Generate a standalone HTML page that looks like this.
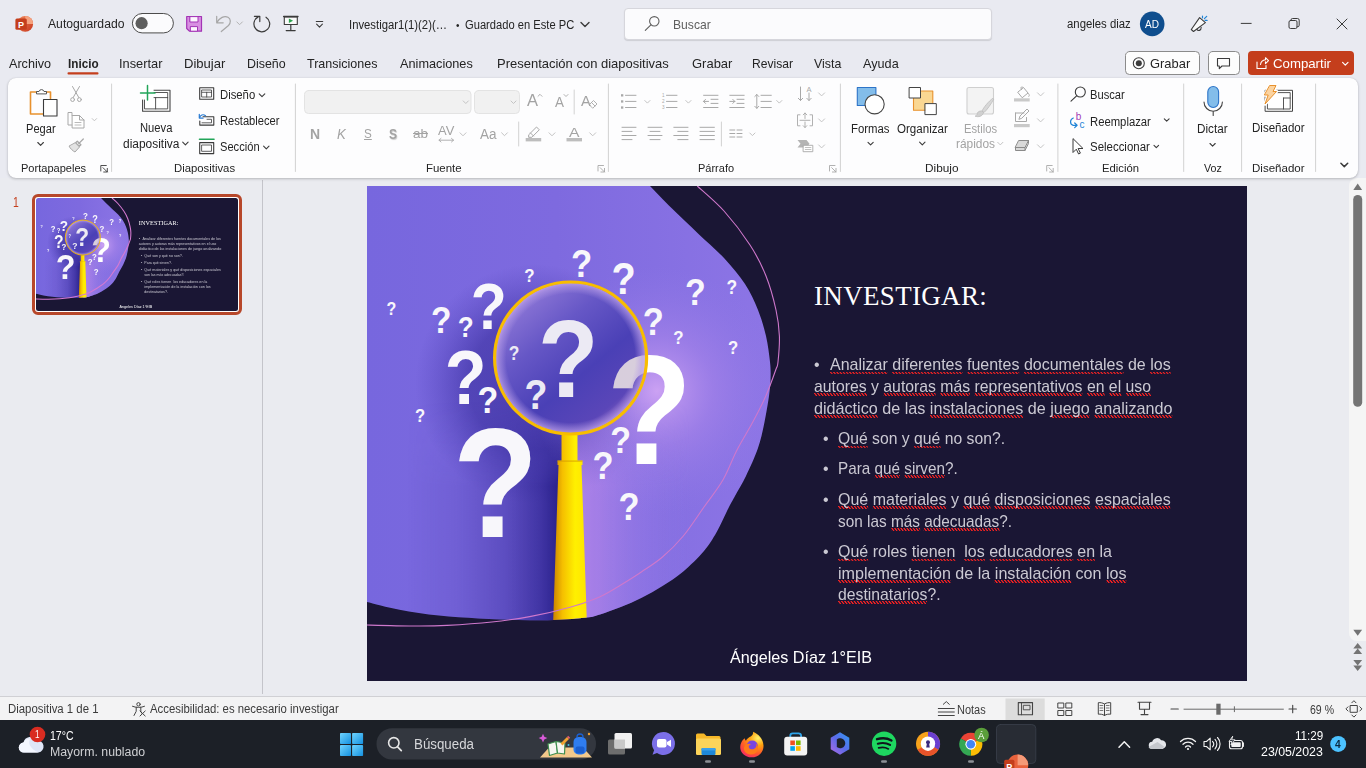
<!DOCTYPE html>
<html lang="es">
<head>
<meta charset="utf-8">
<title>Investigar - PowerPoint</title>
<style>
*{box-sizing:border-box;margin:0;padding:0}
html,body{width:1366px;height:768px;overflow:hidden}
body{position:relative;background:#e9eaf1;font-family:"Liberation Sans",sans-serif;font-size:13px;color:#242424}
.a{position:absolute}
.t{position:absolute;white-space:nowrap;line-height:1;transform-origin:0 0}
#ribbon{left:8px;top:78px;width:1350px;height:99.5px;background:#fdfdfe;border-radius:8px;box-shadow:0 1px 3px rgba(0,0,0,.22),0 0 1px rgba(0,0,0,.15)}
#work{left:0;top:178px;width:1366px;height:519px;background:#eaebf0}
#divider{left:262px;top:180px;width:1px;height:514px;background:#c4c4ca}
#sbtrack{left:1349px;top:178px;width:17px;height:463px;background:#f5f5f5;border-radius:8px 0 0 8px}
#search{left:623.8px;top:8.2px;width:367.8px;height:31.6px;background:#fbfbfd;border:1px solid #d6d6dc;border-radius:4px;box-shadow:0 1px 1px rgba(0,0,0,.12)}
#thumbframe{left:32.2px;top:194.2px;width:209.6px;height:120.6px;border:3px solid #b7472a;border-radius:6px;background:#fff}
#thumb{left:36.1px;top:197.9px;width:202.4px;height:113.4px;overflow:hidden;border-radius:2.5px}
#thumb .slidein{position:absolute;left:0;top:0;width:880px;height:495px;transform:scale(.23);transform-origin:0 0;background:#1a1634;color:#cbc9d3}
#slide{left:367px;top:186px;width:880px;height:495px;background:#1a1634;overflow:hidden;color:#cbc9d3}
#slide .w{background:linear-gradient(45deg,transparent 30%,#f42222 30%,#f42222 70%,transparent 70%) 0 100%/3.4px 2.6px repeat-x}
#slide:after{content:"";position:absolute;inset:0;box-shadow:none}
#status{left:0;top:695.5px;width:1366px;height:24.5px;background:#f3f3f4;border-top:1px solid #d0d0d4}
#taskbar{left:0;top:720px;width:1366px;height:48px;background:#1c2027}
</style>
</head>
<body>
<div class="a" id="work"></div>
<div class="a" id="divider"></div>
<div class="a" id="sbtrack"></div>
<div class="a" id="ribbon"></div>
<div class="a" id="search"></div>
<div class="a" id="thumbframe"></div>
<div class="a" id="status"></div>
<div class="a" id="taskbar"></div>

<svg class="a" style="left:0;top:0;pointer-events:none" width="1366" height="768" viewBox="0 0 1366 768" fill="none" stroke-linecap="round" stroke-linejoin="round">
<defs><linearGradient id="ppg" x1="0" y1="0" x2="1" y2="1"><stop offset="0" stop-color="#f08a5e"/><stop offset="1" stop-color="#c8371c"/></linearGradient><linearGradient id="wing" x1="0" y1="0" x2="1" y2="1"><stop offset="0" stop-color="#6fd4ff"/><stop offset="1" stop-color="#1490df"/></linearGradient></defs>
<circle cx="25.2" cy="23.9" r="7.9" fill="url(#ppg)" />
<path d="M25.2,16 A7.9,7.9 0 0 1 33.1,23.9 L25.2,23.9 Z" fill="#f6a27e" />
<rect x="15.4" y="18.6" width="11.4" height="11.2" fill="#c43e1c" rx="1.5" />
<text x="21.1" y="27.6" font-family="Liberation Sans, sans-serif" font-weight="bold" font-size="9" fill="#fff" text-anchor="middle">P</text>
<rect x="132.4" y="13.5" width="41.0" height="19.4" fill="#fbfbfd" stroke="#4c4c4c" stroke-width="1" rx="9.7" />
<circle cx="141.6" cy="23.2" r="6.1" fill="#5e5e5e" />
<path d="M186.7,16.5 H201.5 V31.2 H189.4 L186.7,28.5 Z" fill="#d88fe2" stroke="#a334b5" stroke-width="1.2" />
<rect x="190.2" y="16.6" width="7.8" height="5.4" fill="#fdf6ff" stroke="#a334b5" stroke-width="1" />
<rect x="190.7" y="26.6" width="6.8" height="4.6" fill="#fdf6ff" stroke="#a334b5" stroke-width="1" />
<path d="M216.7,16.3 V22.8 H223.2 M216.9,22.6 C219.5,17.5 224.5,15.5 228,17.3 C231,19 231,23 228.5,25.5 L221.3,31.5" fill="none" stroke="#a6a6a6" stroke-width="1.2" />
<path d="M236.8,21.9 l2.8,2.8 l2.8,-2.8" stroke="#b4b4b4" stroke-width="1" fill="none"/>
<path d="M266,17.2 A7.9,7.9 0 1 1 258.2,16.9 M254.4,16.3 H259.8 V21.6" fill="none" stroke="#3b3b3b" stroke-width="1.2" />
<rect x="284.3" y="16.9" width="13.0" height="7.6" fill="#fafafa" stroke="#3b3b3b" stroke-width="1.1" />
<path d="M283.6,16.5 L298.0,16.5" stroke="#3b3b3b" stroke-width="1.3"/>
<path d="M290.8,24.6 v5.8 M286.2,30.6 h9" fill="none" stroke="#3b3b3b" stroke-width="1.2" />
<path d="M288.9,18.4 l4.2,2.3 l-4.2,2.3 Z" fill="#2ea44f" />
<path d="M316.3,21.5 L322.7,21.5" stroke="#3b3b3b" stroke-width="1.1"/>
<path d="M316.6,24.2 l2.9,2.9 l2.9,-2.9" stroke="#3b3b3b" stroke-width="1.1" fill="none"/>
<path d="M581.0,22.5 l4.0,4.0 l4.0,-4.0" stroke="#3b3b3b" stroke-width="1.4" fill="none"/>
<circle cx="654.3" cy="21.3" r="4.7" fill="none" stroke="#5f5f5f" stroke-width="1.1" />
<path d="M650.9,24.8 L645.3,30.4" stroke="#5f5f5f" stroke-width="1.1"/>
<circle cx="1152.2" cy="23.9" r="12.3" fill="#0f4e8e" />
<path d="M1191.3,29.5 L1199.6,17.6 L1205.4,22.6 L1193.5,31.5 Z" fill="#fafafa" stroke="#3b3b3b" stroke-width="1.1" />
<path d="M1196.9,29.4 C1198,31.3 1201.2,30.8 1201.2,27.2" fill="none" stroke="#3b3b3b" stroke-width="1.1" />
<path d="M1202.5,16.1 V17.8 M1204.4,18.6 L1206.7,16.3 M1205.1,20.4 H1207.1" fill="none" stroke="#1f84d6" stroke-width="1.2" />
<path d="M1241.2,23.4 L1251.2,23.4" stroke="#3b3b3b" stroke-width="1"/>
<rect x="1289.0" y="20.5" width="8.0" height="8.0" fill="none" stroke="#3b3b3b" stroke-width="1" rx="1.5" />
<path d="M1291,20.3 v-0.3 a1.5,1.5 0 0 1 1.5,-1.5 h5 a1.7,1.7 0 0 1 1.7,1.7 v5 a1.5,1.5 0 0 1 -1.5,1.5 h-0.5" fill="none" stroke="#3b3b3b" stroke-width="1" />
<path d="M1337,19 l10,10 M1347,19 l-10,10" fill="none" stroke="#3b3b3b" stroke-width="1" />
<rect x="67.5" y="72.3" width="31.0" height="2.2" fill="#c43e1c" rx="1" />
<rect x="1125.5" y="51.5" width="74.0" height="23.0" fill="#fdfdfd" stroke="#8b8b8b" stroke-width="1" rx="4" />
<circle cx="1138.8" cy="63.2" r="5.5" fill="none" stroke="#3b3b3b" stroke-width="1.1" />
<circle cx="1138.8" cy="63.2" r="3.0" fill="#3b3b3b" />
<rect x="1208.5" y="51.5" width="31.0" height="23.0" fill="#fdfdfd" stroke="#8b8b8b" stroke-width="1" rx="4" />
<path d="M1217.5,58.5 h12 v7.5 h-7.5 l-2.7,2.7 v-2.7 h-1.8 Z" fill="none" stroke="#3b3b3b" stroke-width="1.1" />
<rect x="1248.0" y="51.0" width="106.0" height="24.0" fill="#c43e1c" rx="4" />
<path d="M1257,62 v6.5 h9 v-3 M1260.5,64.5 c0.5,-3 2.5,-4.6 5,-4.8 v-2 l3,3 l-3,3 v-2" fill="none" stroke="#fff" stroke-width="1.1" />
<path d="M1342.6,62.4 l2.7,2.7 l2.7,-2.7" stroke="#fff" stroke-width="1.2" fill="none"/>
<path d="M111.6,84.0 L111.6,171.5" stroke="#d2d2d2" stroke-width="1"/>
<path d="M295.4,84.0 L295.4,171.5" stroke="#d2d2d2" stroke-width="1"/>
<path d="M608.4,84.0 L608.4,171.5" stroke="#d2d2d2" stroke-width="1"/>
<path d="M840.4,84.0 L840.4,171.5" stroke="#d2d2d2" stroke-width="1"/>
<path d="M1057.9,84.0 L1057.9,171.5" stroke="#d2d2d2" stroke-width="1"/>
<path d="M1183.7,84.0 L1183.7,171.5" stroke="#d2d2d2" stroke-width="1"/>
<path d="M1241.6,84.0 L1241.6,171.5" stroke="#d2d2d2" stroke-width="1"/>
<path d="M1315.6,84.0 L1315.6,171.5" stroke="#d2d2d2" stroke-width="1"/>
<path d="M37,92 h-6.5 v22 h12.5 M50.5,98.5 v-6.5 h-6" fill="none" stroke="#e8912d" stroke-width="1.6" />
<path d="M36.5,93.5 v-2 h2.5 a2.6,2.6 0 0 1 5,0 h2.5 v2 Z" fill="#fff" stroke="#555" stroke-width="1" />
<rect x="43.5" y="99.5" width="13.5" height="16.5" fill="#fff" stroke="#3b3b3b" stroke-width="1.1" />
<path d="M37.8,142.5 l2.8,2.8 l2.8,-2.8" stroke="#3b3b3b" stroke-width="1.1" fill="none"/>
<path d="M72.5,86.5 l6.3,11 M79.5,86.5 l-6.3,11" fill="none" stroke="#a8a8a8" stroke-width="1" />
<circle cx="72.6" cy="99.6" r="1.9" fill="none" stroke="#a8a8a8" stroke-width="1" />
<circle cx="79.4" cy="99.6" r="1.9" fill="none" stroke="#a8a8a8" stroke-width="1" />
<path d="M72,115.5 v-3 h-4 v12.5 h4" fill="none" stroke="#a8a8a8" stroke-width="1" />
<path d="M72.5,115.5 h7 l4.5,4.5 v8 h-11.5 Z M79.5,115.5 v4.5 h4.5" fill="#fff" stroke="#a8a8a8" stroke-width="1" />
<path d="M75,122.5 h6 M75,125 h6" fill="none" stroke="#a8a8a8" stroke-width="0.8" />
<path d="M92.2,118.6 l2.2,2.2 l2.2,-2.2" stroke="#c4c4c4" stroke-width="1" fill="none"/>
<path d="M83.3,139 l-4.6,4.6 M77.3,141.2 l3.6,3.6 l-1.6,1.6 l-3.6,-3.6 Z" fill="none" stroke="#a8a8a8" stroke-width="1.3" />
<path d="M75.5,143 l4,4 l-4.5,5 c-1.5,-0.6 -5,-3.5 -5.8,-5.6 Z" fill="#e3e3e3" stroke="#a8a8a8" stroke-width="1" />
<path d="M100.8,171.0 v-5.5 h5.5 M103.0,167.7 l4.3,4.3 M107.3,168.4 v3.6 h-3.6" fill="none" stroke="#3b3b3b" stroke-width="0.9" />
<rect x="142.6" y="90.2" width="27.4" height="21.0" fill="#fff" stroke="#444" stroke-width="1.1" />
<rect x="144.9" y="92.5" width="22.8" height="16.4" fill="none" stroke="#444" stroke-width="0.9" />
<path d="M144.9,97.6 h22.8 M155.6,97.6 v11.3" fill="none" stroke="#444" stroke-width="0.9" />
<rect x="140.0" y="85.0" width="13.6" height="14.6" fill="#fff" />
<path d="M147.5,85.6 v14.4 M140.5,93 h14.5" fill="none" stroke="#22a559" stroke-width="1.5" />
<path d="M182.7,142.2 l2.7,2.7 l2.7,-2.7" stroke="#3b3b3b" stroke-width="1.1" fill="none"/>
<rect x="199.7" y="87.7" width="14.0" height="11.5" fill="none" stroke="#3b3b3b" stroke-width="1.1" />
<rect x="202.0" y="90.0" width="9.5" height="7.0" fill="none" stroke="#3b3b3b" stroke-width="0.8" />
<path d="M202,92.3 h9.5 M206.7,92.3 v4.7" fill="none" stroke="#3b3b3b" stroke-width="0.8" />
<path d="M259.2,93.8 l2.8,2.8 l2.8,-2.8" stroke="#3b3b3b" stroke-width="1.1" fill="none"/>
<path d="M203,116.8 h10.8 v8.3 h-14 v-4" fill="none" stroke="#3b3b3b" stroke-width="1.1" />
<path d="M207,119.3 h4.5 v3.5 h-9.5" fill="none" stroke="#3b3b3b" stroke-width="0.8" />
<path d="M199.5,118 c0.5,-3.2 3.8,-4.2 6,-2.2 M199.3,114.3 v3.8 h3.8" fill="none" stroke="#2b7cd3" stroke-width="1.2" />
<path d="M199.5,139.3 L214.0,139.3" stroke="#22a559" stroke-width="1.6"/>
<rect x="199.7" y="142.6" width="14.0" height="11.0" fill="none" stroke="#3b3b3b" stroke-width="1.1" />
<rect x="202.0" y="145.0" width="9.5" height="6.3" fill="none" stroke="#3b3b3b" stroke-width="0.8" />
<path d="M263.6,146.1 l2.7,2.7 l2.7,-2.7" stroke="#3b3b3b" stroke-width="1.1" fill="none"/>
<rect x="304.5" y="90.5" width="166.5" height="23.0" fill="#f1f1f1" stroke="#e3e3e3" stroke-width="1" rx="4" />
<path d="M463.2,100.9 l2.6,2.6 l2.6,-2.6" stroke="#c4c4c4" stroke-width="1" fill="none"/>
<rect x="474.5" y="90.5" width="45.0" height="23.0" fill="#f1f1f1" stroke="#e3e3e3" stroke-width="1" rx="4" />
<path d="M511.0,101.0 l2.5,2.5 l2.5,-2.5" stroke="#c4c4c4" stroke-width="1" fill="none"/>
<path d="M538,96.3 l2,-2 l2,2" fill="none" stroke="#a8a8a8" stroke-width="0.9" />
<path d="M564,94.5 l2,2 l2,-2" fill="none" stroke="#a8a8a8" stroke-width="0.9" />
<path d="M574.2,90.0 L574.2,114.0" stroke="#d2d2d2" stroke-width="1"/>
<path d="M589.5,104.5 l4,-4 l3.5,3.5 l-4,4 Z M591.5,102.5 l3.5,3.5" fill="none" stroke="#a8a8a8" stroke-width="0.9" />
<path d="M439,140.2 h14.5 M441,138.4 l-2,1.8 l2,1.8 M451.5,138.4 l2,1.8 l-2,1.8" fill="none" stroke="#a8a8a8" stroke-width="0.9" />
<path d="M460.0,132.8 l3.0,3.0 l3.0,-3.0" stroke="#c4c4c4" stroke-width="1" fill="none"/>
<path d="M501.6,132.8 l2.9,2.9 l2.9,-2.9" stroke="#c4c4c4" stroke-width="1" fill="none"/>
<path d="M518.7,122.0 L518.7,146.0" stroke="#d2d2d2" stroke-width="1"/>
<path d="M529,134.5 l7.5,-7.5 l2.8,2.8 l-7.5,7.5 h-2.8 Z M530.5,133 l3,3" fill="none" stroke="#a8a8a8" stroke-width="1" />
<rect x="525.7" y="138.0" width="15.5" height="3.4" fill="#bdbdbd" />
<path d="M549.0,132.8 l3.0,3.0 l3.0,-3.0" stroke="#c4c4c4" stroke-width="1" fill="none"/>
<rect x="566.5" y="138.0" width="15.5" height="3.4" fill="#bdbdbd" />
<path d="M589.7,132.8 l3.0,3.0 l3.0,-3.0" stroke="#c4c4c4" stroke-width="1" fill="none"/>
<path d="M598.0,171.0 v-5.5 h5.5 M600.2,167.7 l4.3,4.3 M604.5,168.4 v3.6 h-3.6" fill="none" stroke="#a8a8a8" stroke-width="0.9" />
<rect x="621.0" y="94.2" width="2.3" height="2.3" fill="#a8a8a8" />
<path d="M625.5,95.3 L636.0,95.3" stroke="#a8a8a8" stroke-width="1"/>
<rect x="621.0" y="100.3" width="2.3" height="2.3" fill="#a8a8a8" />
<path d="M625.5,101.4 L636.0,101.4" stroke="#a8a8a8" stroke-width="1"/>
<rect x="621.0" y="106.4" width="2.3" height="2.3" fill="#a8a8a8" />
<path d="M625.5,107.5 L636.0,107.5" stroke="#a8a8a8" stroke-width="1"/>
<path d="M644.8,100.5 l2.6,2.6 l2.6,-2.6" stroke="#c4c4c4" stroke-width="1" fill="none"/>
<path d="M666.5,95.3 L677.0,95.3" stroke="#a8a8a8" stroke-width="1"/>
<path d="M666.5,101.4 L677.0,101.4" stroke="#a8a8a8" stroke-width="1"/>
<path d="M666.5,107.5 L677.0,107.5" stroke="#a8a8a8" stroke-width="1"/>
<text x="663.2" y="97" font-family="Liberation Sans, sans-serif" font-size="4.6" fill="#a8a8a8" text-anchor="middle">1</text><text x="663.2" y="103.2" font-family="Liberation Sans, sans-serif" font-size="4.6" fill="#a8a8a8" text-anchor="middle">2</text><text x="663.2" y="109.4" font-family="Liberation Sans, sans-serif" font-size="4.6" fill="#a8a8a8" text-anchor="middle">3</text>
<path d="M685.8,100.5 l2.6,2.6 l2.6,-2.6" stroke="#c4c4c4" stroke-width="1" fill="none"/>
<path d="M703.6,95.3 h14.4 M711,99.3 h7 M711,103.4 h7 M703.6,107.5 h14.4 M708.5,101.4 h-5 M705.5,99.4 l-2,2 l2,2" fill="none" stroke="#a8a8a8" stroke-width="1" />
<path d="M729.8,95.3 h14.4 M737,99.3 h7 M737,103.4 h7 M729.8,107.5 h14.4 M729.8,101.4 h5 M732.8,99.4 l2,2 l-2,2" fill="none" stroke="#a8a8a8" stroke-width="1" />
<path d="M761,95.3 h10.3 M761,101.4 h10.3 M761,107.5 h10.3 M756.8,94.5 v13.8 M754.8,96.5 l2,-2 l2,2 M754.8,106.3 l2,2 l2,-2" fill="none" stroke="#a8a8a8" stroke-width="1" />
<path d="M776.7,100.5 l2.6,2.6 l2.6,-2.6" stroke="#c4c4c4" stroke-width="1" fill="none"/>
<path d="M800.5,87 v13.5 M798.3,98.3 l2.2,2.2 l2.2,-2.2 M809,93 v7.5 M806.8,98.3 l2.2,2.2 l2.2,-2.2" fill="none" stroke="#a8a8a8" stroke-width="1" />
<text x="809" y="92.3" font-family="Liberation Sans, sans-serif" font-size="7.5" fill="#a8a8a8" text-anchor="middle">A</text>
<path d="M818.6,92.9 l3.0,3.0 l3.0,-3.0" stroke="#c4c4c4" stroke-width="1" fill="none"/>
<path d="M800,114.8 h-2.5 v11 h2.5 M810,114.8 h2.5 v11 h-2.5 M800,120.3 h10 M805,113 v5.5 M803.2,114.8 l1.8,-1.8 l1.8,1.8 M805,122 v5.5 M803.2,125.7 l1.8,1.8 l1.8,-1.8" fill="none" stroke="#a8a8a8" stroke-width="0.9" />
<path d="M818.6,118.9 l3.0,3.0 l3.0,-3.0" stroke="#c4c4c4" stroke-width="1" fill="none"/>
<path d="M797.5,140 h9 l3,3.8 l-3,3.8 h-9 l3,-3.8 Z" fill="#b4b4b4" />
<rect x="803.5" y="145.3" width="9.3" height="6.4" fill="#fff" stroke="#a8a8a8" stroke-width="0.9" />
<path d="M805.3,147.5 h5.6 M805.3,149.5 h5.6" fill="none" stroke="#a8a8a8" stroke-width="0.7" />
<path d="M818.6,144.9 l3.0,3.0 l3.0,-3.0" stroke="#c4c4c4" stroke-width="1" fill="none"/>
<path d="M622.0,127.3 L636.0,127.3" stroke="#a8a8a8" stroke-width="1"/>
<path d="M622.0,131.4 L632.0,131.4" stroke="#a8a8a8" stroke-width="1"/>
<path d="M622.0,135.5 L636.0,135.5" stroke="#a8a8a8" stroke-width="1"/>
<path d="M622.0,139.6 L632.0,139.6" stroke="#a8a8a8" stroke-width="1"/>
<path d="M648.0,127.3 L662.0,127.3" stroke="#a8a8a8" stroke-width="1"/>
<path d="M650.0,131.4 L660.0,131.4" stroke="#a8a8a8" stroke-width="1"/>
<path d="M648.0,135.5 L662.0,135.5" stroke="#a8a8a8" stroke-width="1"/>
<path d="M650.0,139.6 L660.0,139.6" stroke="#a8a8a8" stroke-width="1"/>
<path d="M673.8,127.3 L688.0,127.3" stroke="#a8a8a8" stroke-width="1"/>
<path d="M677.8,131.4 L688.0,131.4" stroke="#a8a8a8" stroke-width="1"/>
<path d="M673.8,135.5 L688.0,135.5" stroke="#a8a8a8" stroke-width="1"/>
<path d="M677.8,139.6 L688.0,139.6" stroke="#a8a8a8" stroke-width="1"/>
<path d="M700.0,127.3 L714.4,127.3" stroke="#a8a8a8" stroke-width="1"/>
<path d="M700.0,131.4 L714.4,131.4" stroke="#a8a8a8" stroke-width="1"/>
<path d="M700.0,135.5 L714.4,135.5" stroke="#a8a8a8" stroke-width="1"/>
<path d="M700.0,139.6 L714.4,139.6" stroke="#a8a8a8" stroke-width="1"/>
<path d="M721.4,122.0 L721.4,146.0" stroke="#d2d2d2" stroke-width="1"/>
<path d="M729.8,130.0 L734.8,130.0" stroke="#a8a8a8" stroke-width="1"/>
<path d="M737.0,130.0 L742.0,130.0" stroke="#a8a8a8" stroke-width="1"/>
<path d="M729.8,133.5 L734.8,133.5" stroke="#a8a8a8" stroke-width="1"/>
<path d="M737.0,133.5 L742.0,133.5" stroke="#a8a8a8" stroke-width="1"/>
<path d="M729.8,137.0 L734.8,137.0" stroke="#a8a8a8" stroke-width="1"/>
<path d="M737.0,137.0 L742.0,137.0" stroke="#a8a8a8" stroke-width="1"/>
<path d="M749.8,133.0 l2.6,2.6 l2.6,-2.6" stroke="#c4c4c4" stroke-width="1" fill="none"/>
<path d="M829.5,171.0 v-5.5 h5.5 M831.7,167.7 l4.3,4.3 M836.0,168.4 v3.6 h-3.6" fill="none" stroke="#a8a8a8" stroke-width="0.9" />
<rect x="857.3" y="87.5" width="18.6" height="18.0" fill="#83bdea" stroke="#2d74c8" stroke-width="1.1" />
<circle cx="874.6" cy="104.3" r="9.6" fill="#fff" stroke="#444" stroke-width="1.1" />
<path d="M868.0,142.3 l2.6,2.6 l2.6,-2.6" stroke="#3b3b3b" stroke-width="1.1" fill="none"/>
<rect x="913.5" y="91.0" width="19.3" height="19.3" fill="#fad792" stroke="#e8912d" stroke-width="1.1" />
<rect x="909.5" y="87.5" width="11.0" height="10.5" fill="#fff" stroke="#444" stroke-width="1" />
<rect x="925.3" y="103.6" width="11.0" height="11.0" fill="#fff" stroke="#444" stroke-width="1" />
<path d="M919.6,142.2 l2.7,2.7 l2.7,-2.7" stroke="#3b3b3b" stroke-width="1.1" fill="none"/>
<rect x="967.0" y="87.5" width="26.5" height="26.5" fill="#f3f3f3" stroke="#cfcfcf" stroke-width="1.1" rx="2" />
<path d="M992.5,98.5 c-4,3 -9,9 -10.5,12.5 l2,1.5 c3,-2.5 7.5,-9 9.5,-13 Z" fill="#d8d8d8" stroke="#bdbdbd" stroke-width="0.8" />
<path d="M981.5,111 c-2.5,-0.5 -4.5,1.5 -4.5,3.5 c0,1 -1,1.5 -2,1.5 c3,1.5 8,0.5 8.5,-3.5 Z" fill="#d0d0d0" stroke="#bdbdbd" stroke-width="0.8" />
<path d="M997.7,142.3 l2.6,2.6 l2.6,-2.6" stroke="#c4c4c4" stroke-width="1" fill="none"/>
<path d="M1018,92 l5.5,-4.5 l4.5,5.5 l-5.5,4.5 Z M1021.5,89.5 c-1.5,-2.5 0.5,-3.5 1.5,-2" fill="none" stroke="#a8a8a8" stroke-width="1" />
<path d="M1028.5,93.5 c1,1.5 1.2,2.3 0.3,3" fill="none" stroke="#a8a8a8" stroke-width="0.9" />
<rect x="1014.0" y="98.3" width="15.7" height="3.2" fill="#c9c9c9" />
<path d="M1037.5,92.8 l3.1,3.1 l3.1,-3.1" stroke="#c4c4c4" stroke-width="1" fill="none"/>
<path d="M1015.5,113 h8.5 M1015.5,113 v8.5 h11 v-4 M1019,119 l1,-3 l7,-7 l2,2 l-7,7 Z" fill="none" stroke="#a8a8a8" stroke-width="1" />
<rect x="1014.0" y="124.0" width="15.7" height="3.2" fill="#c9c9c9" />
<path d="M1037.5,118.8 l3.1,3.1 l3.1,-3.1" stroke="#c4c4c4" stroke-width="1" fill="none"/>
<path d="M1019,140.5 h9.5 l-3.5,7 h-9.5 Z M1015.5,147.5 v3 h9.5 v-3 M1025,150.5 l3.5,-7 v-3" fill="#d9d9d9" stroke="#8a8a8a" stroke-width="1" />
<path d="M1037.5,144.8 l3.1,3.1 l3.1,-3.1" stroke="#c4c4c4" stroke-width="1" fill="none"/>
<path d="M1046.7,171.0 v-5.5 h5.5 M1048.9,167.7 l4.3,4.3 M1053.2,168.4 v3.6 h-3.6" fill="none" stroke="#a8a8a8" stroke-width="0.9" />
<circle cx="1080.3" cy="92.0" r="5.0" fill="none" stroke="#3b3b3b" stroke-width="1.1" />
<path d="M1076.6,95.8 L1071.0,101.2" stroke="#3b3b3b" stroke-width="1.1"/>
<text x="1078.5" y="119.6" font-family="Liberation Sans, sans-serif" font-size="10" fill="#a23cb4" text-anchor="middle">b</text><text x="1082" y="128" font-family="Liberation Sans, sans-serif" font-size="10" fill="#1f84d6" text-anchor="middle">c</text>
<path d="M1073.3,118 C1069.8,119.3 1069.5,124.3 1073.2,125.3 H1077 M1074.7,123 l2.4,2.3 l-2.4,2.3" fill="none" stroke="#1f84d6" stroke-width="1.2" />
<path d="M1073,139 v13.5 l3.3,-3.3 l2.3,4.8 l1.8,-0.9 l-2.3,-4.6 h4.5 Z" fill="#fff" stroke="#3b3b3b" stroke-width="1" />
<path d="M1164.3,118.8 l2.4,2.4 l2.4,-2.4" stroke="#3b3b3b" stroke-width="1.1" fill="none"/>
<path d="M1154.0,145.3 l2.3,2.3 l2.3,-2.3" stroke="#3b3b3b" stroke-width="1.1" fill="none"/>
<rect x="1207.8" y="86.5" width="10.8" height="21.0" fill="#83bdea" stroke="#2d74c8" stroke-width="1.1" rx="5.4" />
<path d="M1204,102 a9.2,9.2 0 0 0 18.4,0 M1213.2,111.2 v4.3" fill="none" stroke="#444" stroke-width="1.1" />
<path d="M1210.0,143.5 l2.6,2.6 l2.6,-2.6" stroke="#3b3b3b" stroke-width="1.1" fill="none"/>
<rect x="1265.5" y="90.3" width="27.0" height="21.0" fill="#fff" stroke="#444" stroke-width="1" />
<rect x="1267.8" y="92.6" width="22.4" height="16.4" fill="none" stroke="#444" stroke-width="0.9" />
<path d="M1283.5,98 h6.7 M1283.5,98 v11" fill="none" stroke="#444" stroke-width="0.9" />
<path d="M1270,85.5 h6 l-3,6 h3.5 l-11.5,12.5 l3.2,-9 h-3.5 Z" fill="#fff" stroke="#fff" stroke-width="3.4" />
<path d="M1270,85.5 h6 l-3,6 h3.5 l-11.5,12.5 l3.2,-9 h-3.5 Z" fill="#fbd3a0" stroke="#e8912d" stroke-width="1" />
<path d="M1340.9,163.2 l3.4,3.4 l3.4,-3.4" stroke="#3b3b3b" stroke-width="1.5" fill="none"/>
<path d="M1353.3,190 l4.4,-6.5 l4.4,6.5 Z" fill="#747474" />
<rect x="1353.2" y="195.0" width="9.0" height="211.7" fill="#747474" rx="4.5" />
<path d="M1353.3,629.8 l4.4,6 l4.4,-6 Z" fill="#747474" />
<path d="M1353.3,648.5 l4.4,-5.5 l4.4,5.5 Z M1353.3,654 l4.4,-5.5 l4.4,5.5 Z" fill="#747474" />
<path d="M1353.3,660 l4.4,5.5 l4.4,-5.5 Z M1353.3,665.5 l4.4,5.5 l4.4,-5.5 Z" fill="#747474" />
<circle cx="138.5" cy="704.3" r="1.7" fill="none" stroke="#444" stroke-width="1" />
<path d="M132.5,706.3 c3.5,1.5 8.5,1.5 12,0 M136.2,707.3 v4 l-2.2,4.2 M140.8,707.3 v4 l1,2" fill="none" stroke="#444" stroke-width="1" />
<path d="M140,711 l5.2,5 M145.2,711 l-5.2,5" fill="none" stroke="#444" stroke-width="1" />
<path d="M938.3,708.5 h16 M938.3,712 h16 M938.3,715.5 h16 M943.3,704.3 l3,-2.7 l3,2.7" fill="none" stroke="#444" stroke-width="1" />
<rect x="1005.5" y="698.5" width="39.2" height="21.5" fill="#dcdcdc" />
<rect x="1018.3" y="702.6" width="14.2" height="12.2" fill="none" stroke="#444" stroke-width="1.1" />
<path d="M1021.5,702.6 v12.2" fill="none" stroke="#444" stroke-width="0.9" />
<rect x="1023.7" y="705.3" width="6.3" height="4.5" fill="none" stroke="#444" stroke-width="0.9" />
<rect x="1058.2" y="703.0" width="5.6" height="5.0" fill="none" stroke="#444" stroke-width="1" />
<rect x="1066.2" y="703.0" width="5.6" height="5.0" fill="none" stroke="#444" stroke-width="1" />
<rect x="1058.2" y="710.5" width="5.6" height="5.0" fill="none" stroke="#444" stroke-width="1" />
<rect x="1066.2" y="710.5" width="5.6" height="5.0" fill="none" stroke="#444" stroke-width="1" />
<path d="M1104.5,704 c-2,-1.3 -4,-1.5 -6.2,-1.3 v11.5 c2.2,-0.2 4.2,0 6.2,1.3 c2,-1.3 4,-1.5 6.2,-1.3 v-11.5 c-2.2,-0.2 -4.2,0 -6.2,1.3 v11.5" fill="none" stroke="#444" stroke-width="1" />
<path d="M1100,705.5 h2.8 M1100,708 h2.8 M1100,710.5 h2.8 M1106.3,705.5 h2.8 M1106.3,708 h2.8 M1106.3,710.5 h2.8" fill="none" stroke="#444" stroke-width="0.7" />
<path d="M1138,702.3 h13 M1139.5,702.3 v7 h10 v-7 M1144.5,709.3 v5 M1141,714.6 h7" fill="none" stroke="#444" stroke-width="1.1" />
<path d="M1171.0,709.0 L1178.3,709.0" stroke="#444" stroke-width="1.1"/>
<path d="M1184.0,709.2 L1283.4,709.2" stroke="#6a6a6a" stroke-width="1"/>
<path d="M1234.4,706.7 L1234.4,711.7" stroke="#6a6a6a" stroke-width="1"/>
<rect x="1216.3" y="703.7" width="4.3" height="11.0" fill="#6a6a6a" />
<path d="M1289,709 h7.4 M1292.7,705.3 v7.4" fill="none" stroke="#444" stroke-width="1.1" />
<rect x="1350.5" y="705.5" width="6.8" height="6.8" fill="none" stroke="#444" stroke-width="1" />
<path d="M1351.8,702.8 l2.1,-2.1 l2.1,2.1 M1351.8,715 l2.1,2.1 l2.1,-2.1 M1348,706.8 l-2.1,2.1 l2.1,2.1 M1359.8,706.8 l2.1,2.1 l-2.1,2.1" fill="none" stroke="#444" stroke-width="1" />
<path d="M24,752.5 a5,5 0 0 1 -0.5,-10 a7,7 0 0 1 13,-2 a5.5,5.5 0 0 1 2,12 Z" fill="#dfe6f7" />
<path d="M24,752.5 a5,5 0 0 1 -0.5,-10 a7,7 0 0 1 7,-4 c-3,4 -1,10 8,14 Z" fill="#f4f7ff" />
<circle cx="37.5" cy="734.5" r="7.8" fill="#d92c21" />
<rect x="340.0" y="733.0" width="11.0" height="11.0" fill="url(#wing)" rx="0.8" />
<rect x="352.1" y="733.0" width="11.0" height="11.0" fill="url(#wing)" rx="0.8" />
<rect x="340.0" y="745.1" width="11.0" height="11.0" fill="url(#wing)" rx="0.8" />
<rect x="352.1" y="745.1" width="11.0" height="11.0" fill="url(#wing)" rx="0.8" />
<rect x="376.5" y="728.3" width="219.5" height="31.2" fill="#33373f" rx="15.6" />
<circle cx="393.8" cy="742.8" r="5.2" fill="none" stroke="#e6e6e6" stroke-width="1.6" />
<path d="M397.6,746.8 L401.3,750.6" stroke="#e6e6e6" stroke-width="1.7"/>
<path d="M540,757.5 l9,-10 h34 l9,10 Z" fill="#f3c98b" />
<path d="M548,744 l8,-2.5 l1.5,11.5 l-8,2.5 Z" fill="#f6f6f0" stroke="#3f8f4f" stroke-width="1.2" />
<path d="M556,741.5 l9,1.5 l-0.5,11 l-7,-1 Z" fill="#f6f6f0" stroke="#3f8f4f" stroke-width="1.2" />
<path d="M560.5,743.5 l6.5,-6.5 l2,2 l-6.5,6.5 Z" fill="#f0a030" />
<path d="M567,737 l1.2,-1.2 l2,2 l-1.2,1.2 Z" fill="#e05a70" />
<path d="M543,733.8 l1.3,3 l3,1.3 l-3,1.3 l-1.3,3 l-1.3,-3 l-3,-1.3 l3,-1.3 Z" fill="#d85ad8" />
<rect x="573.5" y="737.0" width="13.0" height="17.5" fill="#2f7df0" rx="5" />
<rect x="575.5" y="746.5" width="9.0" height="7.0" fill="#1b5fd0" rx="2" />
<path d="M577,737 a3,3 0 0 1 6,0" fill="none" stroke="#1b5fd0" stroke-width="1.3" />
<circle cx="589.0" cy="734.0" r="1.2" fill="#f0a030" />
<circle cx="568.5" cy="745.0" r="1.0" fill="#40c0e0" />
<rect x="608.0" y="739.5" width="17.0" height="15.0" fill="#6d6d6d" rx="1.5" />
<rect x="614.5" y="733.0" width="17.5" height="15.5" fill="#f1f1f1" rx="1.5" />
<rect x="614.5" y="739.5" width="10.5" height="9.0" fill="#c9c9c9" />
<path d="M663.5,732 a11.5,11.5 0 1 1 -6.5,21 l-4.5,1.8 l1.6,-4.6 a11.5,11.5 0 0 1 9.4,-18.2 Z" fill="#7b6fe8" />
<rect x="657.0" y="739.0" width="9.5" height="8.6" fill="#fff" rx="2" />
<path d="M667,742 l4,-2.3 v7.2 l-4,-2.3 Z" fill="#fff" />
<path d="M696,735 a1.5,1.5 0 0 1 1.5,-1.5 h6.5 l2.5,2.5 h12.5 a1.5,1.5 0 0 1 1.5,1.5 v15.5 a1.5,1.5 0 0 1 -1.5,1.5 h-21.5 a1.5,1.5 0 0 1 -1.5,-1.5 Z" fill="#f6b828" />
<rect x="696.0" y="738.5" width="25.0" height="16.5" fill="#fcd45a" rx="1.5" />
<rect x="701.5" y="748.0" width="14.0" height="7.0" fill="#1e88d8" rx="1.2" />
<rect x="701.5" y="748.0" width="14.0" height="2.6" fill="#3aa0ea" rx="1" />
<rect x="705.0" y="760.2" width="6.0" height="2.6" fill="#8d9096" rx="1.3" />
<rect x="749.0" y="760.2" width="6.0" height="2.6" fill="#8d9096" rx="1.3" />
<rect x="881.0" y="760.2" width="6.0" height="2.6" fill="#8d9096" rx="1.3" />
<rect x="968.0" y="760.2" width="6.0" height="2.6" fill="#8d9096" rx="1.3" />
<defs><radialGradient id="ffg" cx="758" cy="735" r="24" gradientUnits="userSpaceOnUse"><stop offset="0" stop-color="#fff36b"/><stop offset="0.35" stop-color="#ffa20e"/><stop offset="0.7" stop-color="#ff5a2a"/><stop offset="1" stop-color="#f5256a"/></radialGradient></defs>
<g transform="matrix(1 0 0 0.905 0 72.96)">
<path d="M741.2,740 c0.8,-2.2 2.3,-4.2 3.8,-5 c-0.2,1.2 0.3,2.2 1,2.8 c1.5,-3.5 5,-4 6.5,-6.5 c0.6,-1 0.7,-2 0.5,-3.3 c5.5,2.5 10.2,8 10.5,15 c0.3,7.5 -5.2,13.2 -11.8,13.2 c-6.7,0 -11.6,-5.2 -11.5,-11.5 c0,-1.7 0.4,-3.3 1,-4.7 Z" fill="url(#ffg)" />
<circle cx="752.2" cy="743.2" r="5.6" fill="#7a45e0" />
<path d="M745.5,742.5 c1.5,-1.6 4,-1.8 5.5,-0.5 c-2,0.3 -2.8,2 -2,3.6 c0.9,1.8 3.4,2.3 5.3,1.2 c2,-1.2 2.6,-3.6 1.8,-5.8 c3,3 2.5,8.5 -1.2,11 c-3.8,2.5 -9,1 -10.6,-3.3 c-0.8,-2.2 -0.3,-4.6 1.2,-6.2 Z" fill="#ff7a1a" />
</g>
<path d="M790.3,737 v-1.3 a2.4,2.4 0 0 1 2.4,-2.4 h6 a2.4,2.4 0 0 1 2.4,2.4 v1.3" fill="none" stroke="#2ea4ea" stroke-width="1.8" />
<rect x="784.2" y="736.8" width="23.0" height="18.8" fill="#f4f4f4" rx="3" />
<rect x="790.3" y="740.5" width="4.6" height="4.6" fill="#f25022" />
<rect x="796.0" y="740.5" width="4.6" height="4.6" fill="#7fba00" />
<rect x="790.3" y="746.2" width="4.6" height="4.6" fill="#00a4ef" />
<rect x="796.0" y="746.2" width="4.6" height="4.6" fill="#ffb900" />
<defs><linearGradient id="m365" x1="0" y1="1" x2="1" y2="0"><stop offset="0" stop-color="#b06ae6"/><stop offset="0.5" stop-color="#5b6be8"/><stop offset="1" stop-color="#2f9bf2"/></linearGradient></defs>
<path d="M840,732.3 l9.3,5.4 v11.6 l-9.3,5.4 l-9.3,-5.4 v-11.6 Z" fill="url(#m365)" />
<path d="M840,738.2 c3,0 5.2,2.2 5.2,5 c0,2.8 -2.2,5 -5.2,5 c-1.2,0 -2.3,-0.4 -3.2,-1.1 l0,-7.5 c0.9,-0.9 2,-1.4 3.2,-1.4 Z" fill="#1c2027" />
<path d="M836.8,739.6 l-6.1,3.6 v-5.5 l6.1,-3.5 Z" fill="#1c2027" opacity=".0"/>
<circle cx="884.1" cy="743.7" r="12.2" fill="#1ed760" />
<path d="M877,739.2 c5,-1.5 10.5,-1 14.5,1.3" fill="none" stroke="#10151c" stroke-width="2.3" />
<path d="M877.8,743.7 c4.2,-1.2 8.8,-0.8 12.3,1.2" fill="none" stroke="#10151c" stroke-width="2" />
<path d="M878.6,747.9 c3.4,-0.9 7,-0.6 9.8,1" fill="none" stroke="#10151c" stroke-width="1.7" />
<circle cx="928.0" cy="743.7" r="12.0" fill="#f7a21b" />
<path d="M928,731.7 a12,12 0 0 1 10.4,18 l-10.4,-6 Z" fill="#6b3fd0" />
<path d="M917.6,749.7 a12,12 0 0 0 20.8,0 l-10.4,-6 Z" fill="#e8532a" />
<circle cx="928.0" cy="743.7" r="7.2" fill="#fff" />
<circle cx="928.0" cy="742.3" r="2.0" fill="#3a2a80" />
<path d="M927,743 h2 l0.8,4.5 h-3.6 Z" fill="#3a2a80" />
<path d="M970.8,744.3 L960.8,738.5 A11.5,11.5 0 0 1 980.8,738.5 Z" fill="#ea4335" />
<path d="M970.8,744.3 L980.8,738.5 A11.5,11.5 0 0 1 970.8,755.8 Z" fill="#fbbc04" />
<path d="M970.8,744.3 L970.8,755.8 A11.5,11.5 0 0 1 960.8,738.5 Z" fill="#34a853" />
<circle cx="970.8" cy="744.3" r="5.4" fill="#fff" />
<circle cx="970.8" cy="744.3" r="4.3" fill="#4285f4" />
<circle cx="981.6" cy="735.0" r="7.3" fill="#5a9e3a" />
<rect x="996.5" y="724.5" width="39.3" height="39.0" fill="#282c34" rx="4" stroke="#3a404b" stroke-width="0.8"/>
<circle cx="1017.6" cy="765.2" r="10.6" fill="#e8623c" />
<path d="M1017.6,754.6 a10.6,10.6 0 0 1 10.6,10.6 h-10.6 Z" fill="#f59a78" />
<rect x="1004.2" y="759.8" width="10.2" height="9.0" fill="#c43e1c" rx="1.5" />
<text x="1009.3" y="769.8" font-family="Liberation Sans, sans-serif" font-weight="bold" font-size="9" fill="#fff" text-anchor="middle">P</text>
<path d="M1119,747.3 l5.3,-5.6 l5.3,5.6" fill="none" stroke="#f2f2f2" stroke-width="1.5" />
<path d="M1152.5,749 a3.6,3.6 0 0 1 -0.3,-7.2 a5,5 0 0 1 9,-1.5 a4,4 0 0 1 1,8.7 Z" fill="#e4e6ea" />
<path d="M1148.5,747 l9,-5 l6.5,4.5 a3,3 0 0 1 -2.5,2.5 h-9.5 a3.5,3.5 0 0 1 -3.5,-2 Z" fill="#c4c7cc" />
<path d="M1180.5,741.5 a10.5,10.5 0 0 1 15,0 M1183,744.3 a7,7 0 0 1 10,0 M1185.5,747 a3.5,3.5 0 0 1 5,0" fill="none" stroke="#f2f2f2" stroke-width="1.3" />
<circle cx="1188.0" cy="749.0" r="1.1" fill="#f2f2f2" />
<path d="M1204,741.5 h2.5 l3.7,-3.3 v11.6 l-3.7,-3.3 h-2.5 Z" fill="none" stroke="#f2f2f2" stroke-width="1.1" />
<path d="M1212.5,741.3 a4,4 0 0 1 0,5.5 M1215,739.3 a7,7 0 0 1 0,9.5 M1217.5,737.5 a9.5,9.5 0 0 1 0,13" fill="none" stroke="#f2f2f2" stroke-width="1.1" />
<rect x="1229.5" y="740.5" width="13.0" height="8.3" fill="none" stroke="#f2f2f2" stroke-width="1.1" rx="2" />
<rect x="1231.3" y="742.2" width="9.4" height="4.9" fill="#f2f2f2" rx="0.8" />
<path d="M1243.3,743 v3.3" fill="none" stroke="#f2f2f2" stroke-width="1.3" />
<path d="M1232.5,736.5 l-3.5,5 h3 l-1,3.5 l4,-5.2 h-3 Z" fill="#1c212b" stroke="#f2f2f2" stroke-width="0.9" />
<circle cx="1338.2" cy="743.9" r="8.0" fill="#4cc2ff" />
</svg>
<div class="t" style="left:48.0px;top:17.6px;font-size:12.5px;transform:scaleX(0.973);">Autoguardado</div>
<div class="t" style="left:349.0px;top:18.8px;font-size:12.5px;transform:scaleX(0.904);">Investigar1(1)(2)(…</div>
<div class="t" style="left:455.5px;top:20.9px;font-size:10px;transform:scaleX(0.996);">•</div>
<div class="t" style="left:465.3px;top:18.8px;font-size:12.5px;transform:scaleX(0.893);">Guardado en Este PC</div>
<div class="t" style="left:673.0px;top:17.6px;font-size:13px;transform:scaleX(0.932);color:#5f5f5f;">Buscar</div>
<div class="t" style="left:1067.4px;top:18.0px;font-size:12.5px;transform:scaleX(0.909);">angeles diaz</div>
<div class="t" style="left:1145.0px;top:18.7px;font-size:10.5px;transform:scaleX(0.959);color:#fff;">AD</div>
<div class="t" style="left:9.1px;top:56.9px;font-size:13px;transform:scaleX(0.971);">Archivo</div>
<div class="t" style="left:67.7px;top:56.9px;font-size:13px;transform:scaleX(0.901);font-weight:700;">Inicio</div>
<div class="t" style="left:119.2px;top:56.9px;font-size:13px;transform:scaleX(0.985);">Insertar</div>
<div class="t" style="left:184.2px;top:56.9px;font-size:13px;transform:scaleX(1.005);">Dibujar</div>
<div class="t" style="left:246.5px;top:56.9px;font-size:13px;transform:scaleX(0.956);">Diseño</div>
<div class="t" style="left:307.0px;top:56.9px;font-size:13px;transform:scaleX(0.962);">Transiciones</div>
<div class="t" style="left:400.0px;top:56.9px;font-size:13px;transform:scaleX(0.978);">Animaciones</div>
<div class="t" style="left:497.0px;top:56.9px;font-size:13px;transform:scaleX(0.999);">Presentación con diapositivas</div>
<div class="t" style="left:692.3px;top:56.9px;font-size:13px;transform:scaleX(0.998);">Grabar</div>
<div class="t" style="left:752.3px;top:56.9px;font-size:13px;transform:scaleX(0.930);">Revisar</div>
<div class="t" style="left:814.2px;top:56.9px;font-size:13px;transform:scaleX(0.952);">Vista</div>
<div class="t" style="left:863.0px;top:56.9px;font-size:13px;transform:scaleX(0.974);">Ayuda</div>
<div class="t" style="left:1149.8px;top:56.5px;font-size:13px;transform:scaleX(0.993);">Grabar</div>
<div class="t" style="left:1272.7px;top:56.5px;font-size:13px;transform:scaleX(1.016);color:#fff;">Compartir</div>
<div class="t" style="left:26.4px;top:122.7px;font-size:12px;transform:scaleX(0.924);">Pegar</div>
<div class="t" style="left:20.9px;top:162.3px;font-size:11.6px;transform:scaleX(0.953);">Portapapeles</div>
<div class="t" style="left:140.0px;top:121.6px;font-size:12px;transform:scaleX(0.934);">Nueva</div>
<div class="t" style="left:122.6px;top:137.6px;font-size:12px;transform:scaleX(0.995);">diapositiva</div>
<div class="t" style="left:219.6px;top:88.7px;font-size:12px;transform:scaleX(0.942);">Diseño</div>
<div class="t" style="left:219.6px;top:114.6px;font-size:12px;transform:scaleX(0.928);">Restablecer</div>
<div class="t" style="left:219.6px;top:140.9px;font-size:12px;transform:scaleX(0.927);">Sección</div>
<div class="t" style="left:173.5px;top:162.3px;font-size:11.6px;transform:scaleX(0.977);">Diapositivas</div>
<div class="t" style="left:426.2px;top:162.3px;font-size:11.6px;transform:scaleX(0.986);">Fuente</div>
<div class="t" style="left:698.2px;top:162.3px;font-size:11.6px;transform:scaleX(0.949);">Párrafo</div>
<div class="t" style="left:851.2px;top:122.6px;font-size:12px;transform:scaleX(0.947);">Formas</div>
<div class="t" style="left:897.4px;top:122.6px;font-size:12px;transform:scaleX(0.964);">Organizar</div>
<div class="t" style="left:964.0px;top:122.6px;font-size:12px;transform:scaleX(0.934);color:#a3a3a3;">Estilos</div>
<div class="t" style="left:955.5px;top:138.3px;font-size:12px;transform:scaleX(0.993);color:#a3a3a3;">rápidos</div>
<div class="t" style="left:924.8px;top:162.3px;font-size:11.6px;transform:scaleX(1.019);">Dibujo</div>
<div class="t" style="left:1089.9px;top:89.3px;font-size:12px;transform:scaleX(0.929);">Buscar</div>
<div class="t" style="left:1089.9px;top:115.6px;font-size:12px;transform:scaleX(0.941);">Reemplazar</div>
<div class="t" style="left:1089.9px;top:141.3px;font-size:12px;transform:scaleX(0.954);">Seleccionar</div>
<div class="t" style="left:1102.4px;top:162.3px;font-size:11.6px;transform:scaleX(0.973);">Edición</div>
<div class="t" style="left:1197.4px;top:123.2px;font-size:12px;transform:scaleX(0.976);">Dictar</div>
<div class="t" style="left:1204.2px;top:162.3px;font-size:11.6px;transform:scaleX(0.920);">Voz</div>
<div class="t" style="left:1252.3px;top:122.3px;font-size:12px;transform:scaleX(0.962);">Diseñador</div>
<div class="t" style="left:1252.3px;top:162.3px;font-size:11.6px;transform:scaleX(0.995);">Diseñador</div>
<div class="t" style="left:310.2px;top:126.5px;font-size:14px;transform:scaleX(0.998);color:#a3a3a3;font-weight:700;">N</div>
<div class="t" style="left:337.2px;top:126.5px;font-size:14px;transform:scaleX(0.942);color:#a3a3a3;font-style:italic;">K</div>
<div class="t" style="left:364.0px;top:126.6px;font-size:13.5px;transform:scaleX(0.865);color:#a3a3a3;text-decoration:underline;">S</div>
<div class="t" style="left:389.4px;top:126.5px;font-size:14px;transform:scaleX(0.856);color:#a3a3a3;font-weight:700;text-shadow:1px 1px 1px #ccc;">S</div>
<div class="t" style="left:412.5px;top:127.4px;font-size:13px;transform:scaleX(1.037);color:#a3a3a3;text-decoration:line-through;">ab</div>
<div class="t" style="left:438.0px;top:124.9px;font-size:12.5px;transform:scaleX(1.035);color:#a3a3a3;">AV</div>
<div class="t" style="left:480.0px;top:126.5px;font-size:14px;transform:scaleX(0.964);color:#a3a3a3;">Aa</div>
<div class="t" style="left:527.0px;top:92.2px;font-size:17px;transform:scaleX(0.970);color:#a3a3a3;">A</div>
<div class="t" style="left:554.5px;top:94.7px;font-size:14px;transform:scaleX(0.963);color:#a3a3a3;">A</div>
<div class="t" style="left:581.2px;top:92.9px;font-size:15px;transform:scaleX(0.978);color:#a3a3a3;">A</div>
<div class="t" style="left:569.0px;top:125.6px;font-size:13.5px;transform:scaleX(1.165);color:#a3a3a3;">A</div>
<div class="t" style="left:8.2px;top:703.2px;font-size:12px;transform:scaleX(0.949);color:#3b3b3b;">Diapositiva 1 de 1</div>
<div class="t" style="left:150.2px;top:703.2px;font-size:12px;transform:scaleX(0.946);color:#3b3b3b;">Accesibilidad: es necesario investigar</div>
<div class="t" style="left:956.6px;top:704.0px;font-size:12px;transform:scaleX(0.915);color:#3b3b3b;">Notas</div>
<div class="t" style="left:1310.0px;top:703.9px;font-size:12px;transform:scaleX(0.877);color:#3b3b3b;">69 %</div>
<div class="t" style="left:50.4px;top:730.0px;font-size:12.5px;transform:scaleX(0.845);color:#fff;">17°C</div>
<div class="t" style="left:50.4px;top:745.7px;font-size:12.5px;transform:scaleX(0.985);color:#cfd0d3;">Mayorm. nublado</div>
<div class="t" style="left:413.5px;top:736.8px;font-size:14px;transform:scaleX(0.951);color:#d6d7da;">Búsqueda</div>
<div class="t" style="left:1294.6px;top:729.9px;font-size:12.5px;transform:scaleX(0.932);color:#fff;">11:29</div>
<div class="t" style="left:1261.0px;top:745.8px;font-size:12.5px;transform:scaleX(0.989);color:#fff;">23/05/2023</div>
<div class="t" style="left:1335.3px;top:738.7px;font-size:10.5px;transform:scaleX(0.975);color:#0b2a40;font-weight:700;">4</div>
<div class="t" style="left:35.3px;top:729.3px;font-size:11px;transform:scaleX(0.735);color:#fff;">1</div>
<div class="t" style="left:978.4px;top:730.6px;font-size:9.5px;transform:scaleX(1.009);color:#fff;">Á</div>
<div class="t" style="left:13.2px;top:193.9px;font-size:15.5px;transform:scaleX(0.672);color:#c43e1c;">1</div>
<div class="a" id="slide">
<svg class="a" style="left:0;top:0" width="880" height="495" viewBox="0 0 880 495" font-family="Liberation Sans, sans-serif" font-weight="bold" text-anchor="middle">
<defs>
<linearGradient id="bg" x1="0" y1="0" x2="1" y2="0"><stop offset="0" stop-color="#7767de"/><stop offset="0.45" stop-color="#7e6adf"/><stop offset="1" stop-color="#8e76e6"/></linearGradient>
<radialGradient id="glow" cx="290" cy="205" r="125" gradientUnits="userSpaceOnUse"><stop offset="0" stop-color="#cfa4f4" stop-opacity="0.95"/><stop offset="0.45" stop-color="#aa86ea" stop-opacity="0.55"/><stop offset="1" stop-color="#9079e6" stop-opacity="0"/></radialGradient>
<linearGradient id="hand" x1="0" y1="0" x2="1" y2="0"><stop offset="0" stop-color="#c98200"/><stop offset="0.28" stop-color="#f5bf00"/><stop offset="0.65" stop-color="#fff000"/><stop offset="1" stop-color="#ffe400"/></linearGradient>
<linearGradient id="lens" x1="0.15" y1="0.1" x2="0.85" y2="0.95"><stop offset="0" stop-color="#9079d8"/><stop offset="0.3" stop-color="#6657c6"/><stop offset="0.6" stop-color="#4a40b6"/><stop offset="0.85" stop-color="#5a46b8"/><stop offset="1" stop-color="#9a6cc8"/></linearGradient>
<radialGradient id="rim" cx="203.6" cy="172" r="75" gradientUnits="userSpaceOnUse"><stop offset="0.86" stop-color="#b49ae6" stop-opacity="0"/><stop offset="0.95" stop-color="#b49ae6" stop-opacity="0.55"/><stop offset="1" stop-color="#c9a8ee" stop-opacity="0.75"/></radialGradient>
<radialGradient id="lshd" cx="168" cy="198" r="120" gradientUnits="userSpaceOnUse"><stop offset="0" stop-color="#2a2190" stop-opacity="0.6"/><stop offset="0.55" stop-color="#2a2190" stop-opacity="0.5"/><stop offset="0.8" stop-color="#2f2598" stop-opacity="0.2"/><stop offset="1" stop-color="#3a2fa4" stop-opacity="0"/></radialGradient>
<linearGradient id="hshd" x1="40" y1="0" x2="203.5" y2="0" gradientUnits="userSpaceOnUse"><stop offset="0" stop-color="#2a2190" stop-opacity="0"/><stop offset="0.3" stop-color="#2a2190" stop-opacity="0.12"/><stop offset="0.6" stop-color="#2a2190" stop-opacity="0.38"/><stop offset="0.82" stop-color="#261d8a" stop-opacity="0.7"/><stop offset="0.93" stop-color="#221a84" stop-opacity="0.92"/><stop offset="1" stop-color="#221a84" stop-opacity="0.95"/></linearGradient>
<linearGradient id="hglow" x1="203" y1="0" x2="323" y2="0" gradientUnits="userSpaceOnUse"><stop offset="0" stop-color="#b888ea" stop-opacity="0.85"/><stop offset="0.25" stop-color="#b888ea" stop-opacity="0.6"/><stop offset="0.6" stop-color="#a884ea" stop-opacity="0.25"/><stop offset="1" stop-color="#9079e6" stop-opacity="0"/></linearGradient>
<linearGradient id="vf" x1="0" y1="215" x2="0" y2="300" gradientUnits="userSpaceOnUse"><stop offset="0" stop-color="#000"/><stop offset="1" stop-color="#fff"/></linearGradient>
<mask id="vfade" maskUnits="userSpaceOnUse" x="0" y="0" width="880" height="495"><rect x="0" y="0" width="880" height="495" fill="url(#vf)"/></mask>
<filter id="b18" x="-50%" y="-50%" width="200%" height="200%"><feGaussianBlur stdDeviation="20"/></filter>
<filter id="b8" x="-50%" y="-50%" width="200%" height="200%"><feGaussianBlur stdDeviation="9"/></filter>
<clipPath id="blobclip"><path d="M0,0 L283.0,0.0 C286.7,3.8 297.0,14.7 305.0,22.6 C313.0,30.5 322.3,39.2 331.0,47.4 C339.7,55.6 349.2,63.6 357.0,72.0 C364.8,80.4 372.3,89.3 378.0,98.0 C383.7,106.7 387.5,115.3 391.0,124.0 C394.5,132.7 397.0,141.3 399.0,150.0 C401.0,158.7 402.2,168.7 403.0,176.0 C403.8,183.3 403.7,188.3 403.5,194.0 C403.3,199.7 403.0,203.0 402.0,210.0 C401.0,217.0 399.3,227.3 397.5,236.0 C395.7,244.7 394.1,253.0 391.0,262.0 C387.9,271.0 382.8,282.0 379.0,290.0 C375.2,298.0 370.8,304.8 368.0,310.0 C365.2,315.2 365.1,315.0 362.0,321.0 C358.9,327.0 353.9,338.7 349.7,346.0 C345.5,353.3 342.6,358.4 337.0,365.0 C331.4,371.6 322.9,379.9 316.0,385.7 C309.1,391.5 302.4,395.7 295.5,400.0 C288.6,404.3 281.7,408.2 274.7,411.7 C267.8,415.2 260.7,418.2 253.8,421.0 C246.8,423.8 238.7,426.6 233.0,428.4 C227.3,430.1 227.4,430.6 219.7,431.5 C212.0,432.4 198.2,433.6 186.7,434.0 C175.3,434.4 163.5,434.1 151.0,433.9 C138.5,433.6 124.8,433.2 111.6,432.5 C98.4,431.8 85.2,431.1 72.0,429.6 C58.8,428.2 44.5,426.1 32.5,423.8 C20.5,421.5 5.4,417.3 0.0,416.0 L0,416.0 Z"/></clipPath>
<clipPath id="lensclip"><circle cx="203.6" cy="172" r="75"/></clipPath>
<clipPath id="leftc"><rect x="0" y="0" width="203" height="495"/></clipPath>
<clipPath id="rightc"><rect x="203" y="0" width="300" height="495"/></clipPath>
</defs>
<g clip-path="url(#blobclip)">
<rect width="420" height="440" fill="url(#bg)"/>
<rect x="40" y="60" width="280" height="260" fill="url(#lshd)"/>
<rect x="40" y="215" width="163.5" height="260" fill="url(#hshd)" mask="url(#vfade)"/>
<rect x="150" y="60" width="280" height="330" fill="url(#glow)"/>
<rect x="203" y="215" width="120" height="260" fill="url(#hglow)" mask="url(#vfade)"/>
<text transform="translate(282.5,278.0) scale(.9,1)" font-size="155.2" fill="#ffffff">?</text>
<text transform="translate(24.5,128.5) scale(.9,1)" font-size="17.8" fill="#f8f7fb">?</text>
<text transform="translate(74.3,147.0) scale(.9,1)" font-size="37.2" fill="#f8f7fb">?</text>
<text transform="translate(98.7,150.5) scale(.9,1)" font-size="29.0" fill="#f8f7fb">?</text>
<text transform="translate(121.7,143.0) scale(.9,1)" font-size="65.4" fill="#f8f7fb">?</text>
<text transform="translate(162.3,96.3) scale(.9,1)" font-size="18.8" fill="#f8f7fb">?</text>
<text transform="translate(214.5,91.0) scale(.9,1)" font-size="38.6" fill="#f8f7fb">?</text>
<text transform="translate(256.5,108.0) scale(.9,1)" font-size="44.1" fill="#f8f7fb">?</text>
<text transform="translate(328.3,119.3) scale(.9,1)" font-size="37.7" fill="#f8f7fb">?</text>
<text transform="translate(364.8,108.0) scale(.9,1)" font-size="19.3" fill="#f8f7fb">?</text>
<text transform="translate(286.3,148.8) scale(.9,1)" font-size="38.3" fill="#f8f7fb">?</text>
<text transform="translate(311.3,157.6) scale(.9,1)" font-size="18.8" fill="#f8f7fb">?</text>
<text transform="translate(366.2,168.0) scale(.9,1)" font-size="18.6" fill="#f8f7fb">?</text>
<text transform="translate(98.7,218.0) scale(.9,1)" font-size="75.9" fill="#f8f7fb">?</text>
<text transform="translate(121.0,227.0) scale(.9,1)" font-size="37.8" fill="#f8f7fb">?</text>
<text transform="translate(53.0,236.0) scale(.9,1)" font-size="18.5" fill="#f8f7fb">?</text>
<text transform="translate(128.5,351.4) scale(.9,1)" font-size="155.7" fill="#f8f7fb">?</text>
<text transform="translate(253.7,267.4) scale(.9,1)" font-size="37.8" fill="#f8f7fb">?</text>
<text transform="translate(236.0,292.8) scale(.9,1)" font-size="38.3" fill="#f8f7fb">?</text>
<text transform="translate(262.0,334.4) scale(.9,1)" font-size="38.2" fill="#f8f7fb">?</text>
<path d="M194.5,249 L210.5,249 L210.5,274.5 L215.5,274.5 L215.5,279 L214.5,279 L220,440 L186,440 L191.5,279 L190.5,279 L190.5,274.5 L194.5,274.5 Z" fill="url(#hand)"/>
<rect x="190.5" y="274.5" width="25" height="1.2" fill="#d69a00" opacity=".7"/>
</g>
<circle cx="203.6" cy="172" r="76" fill="url(#lens)"/>
<g clip-path="url(#lensclip)">
<text transform="translate(282.5,278.0) scale(.9,1)" font-size="155.2" fill="#ebe2e2" opacity=".88">?</text>
<text transform="translate(201.3,210.7) scale(.9,1)" font-size="109.9" fill="#eceaf4">?</text>
<text transform="translate(147.0,174.0) scale(.9,1)" font-size="19.3" fill="#eceaf4">?</text>
<text transform="translate(169.0,223.0) scale(.9,1)" font-size="41.7" fill="#eceaf4">?</text>
</g>
<circle cx="203.6" cy="172" r="75" fill="url(#rim)"/>
<circle cx="203.6" cy="172" r="76" fill="none" stroke="#f8bd00" stroke-width="3.2"/>
<path d="M330.3,0.0 C334.7,4.2 348.2,15.2 357.0,25.0 C365.8,34.8 376.0,48.2 383.0,59.0 C390.0,69.8 394.7,79.2 399.0,90.0 C403.3,100.8 406.8,114.0 409.0,124.0 C411.2,134.0 412.1,141.3 412.4,150.0 C412.7,158.7 411.6,170.3 411.0,176.0 C410.4,181.7 410.7,178.3 408.7,184.0 C406.7,189.7 402.6,201.3 398.8,210.0 C395.0,218.7 390.6,227.0 385.8,236.0 C381.0,245.0 375.0,254.3 370.0,264.0 C365.0,273.7 361.4,284.5 355.9,294.0 C350.4,303.5 343.6,311.7 337.0,321.0 C330.4,330.3 323.2,341.7 316.3,350.0 C309.4,358.3 302.4,365.1 295.5,371.0 C288.6,376.9 281.7,381.0 274.7,385.7 C267.8,390.4 260.7,394.8 253.8,399.0 C246.8,403.2 241.3,407.0 233.0,410.7 C224.7,414.4 215.3,417.7 203.8,421.0 C192.3,424.3 177.2,427.9 164.0,430.4 C150.8,432.9 138.8,434.5 124.8,436.0 C110.8,437.5 93.2,438.7 80.0,439.4 C66.8,440.1 59.0,440.1 45.7,440.0 C32.4,439.9 7.6,439.2 0.0,439.0" fill="none" stroke="#cf78cc" stroke-width="1.1"/>
</svg>
<div class="t" style="left:447.0px;top:97.0px;font-size:27px;color:#ffffff;font-family:'Liberation Serif',serif;letter-spacing:0.33px;">INVESTIGAR:</div>
<div class="t" style="left:447.0px;top:170.3px;font-size:17px;transform:scaleX(0.941);">•</div>
<div class="t" style="left:463.0px;top:170.3px;font-size:17px;transform:scaleX(0.941);"><span class="w">Analizar</span> <span class="w">diferentes</span> <span class="w">fuentes</span> <span class="w">documentales</span> de <span class="w">los</span></div>
<div class="t" style="left:447.0px;top:192.0px;font-size:17px;transform:scaleX(0.9285);"><span class="w">autores</span> y <span class="w">autoras</span> <span class="w">más</span> <span class="w">representativos</span> <span class="w">en</span> <span class="w">el</span> <span class="w">uso</span></div>
<div class="t" style="left:447.0px;top:213.6px;font-size:17px;transform:scaleX(0.9503);"><span class="w">didáctico</span> de las <span class="w">instalaciones</span> de <span class="w">juego</span> <span class="w">analizando</span></div>
<div class="t" style="left:456.0px;top:244.1px;font-size:17px;transform:scaleX(0.941);">•</div>
<div class="t" style="left:471.0px;top:244.1px;font-size:17px;transform:scaleX(0.925);"><span class="w">Qué</span> son y <span class="w">qué</span> no son?.</div>
<div class="t" style="left:456.0px;top:274.0px;font-size:17px;transform:scaleX(0.941);">•</div>
<div class="t" style="left:471.0px;top:274.0px;font-size:17px;transform:scaleX(0.8982);">Para <span class="w">qué</span> <span class="w">sirven</span>?.</div>
<div class="t" style="left:456.0px;top:304.9px;font-size:17px;transform:scaleX(0.941);">•</div>
<div class="t" style="left:471.0px;top:304.9px;font-size:17px;transform:scaleX(0.941);"><span class="w">Qué</span> <span class="w">materiales</span> y <span class="w">qué</span> <span class="w">disposiciones</span> <span class="w">espaciales</span></div>
<div class="t" style="left:471.0px;top:326.7px;font-size:17px;transform:scaleX(0.9024);">son las <span class="w">más</span> <span class="w">adecuadas</span>?.</div>
<div class="t" style="left:456.0px;top:357.2px;font-size:17px;transform:scaleX(0.941);">•</div>
<div class="t" style="left:471.0px;top:357.2px;font-size:17px;transform:scaleX(0.941);"><span class="w">Qué</span> roles <span class="w">tienen</span>&nbsp; <span class="w">los</span> <span class="w">educadores</span> <span class="w">en</span> la</div>
<div class="t" style="left:471.0px;top:378.7px;font-size:17px;transform:scaleX(0.9482);"><span class="w">implementación</span> de la <span class="w">instalación</span> con <span class="w">los</span></div>
<div class="t" style="left:471.0px;top:400.0px;font-size:17px;transform:scaleX(0.9274);"><span class="w">destinatarios</span>?.</div>
<div class="t" style="left:363.0px;top:463.4px;font-size:17px;color:#ffffff;transform:scaleX(0.95);">Ángeles Díaz 1°EIB</div>
</div>
<div class="a" id="thumb"><div class="slidein">
<svg class="a" style="left:0;top:0" width="880" height="495" viewBox="0 0 880 495" font-family="Liberation Sans, sans-serif" font-weight="bold" text-anchor="middle">
<defs>
<linearGradient id="bgT" x1="0" y1="0" x2="1" y2="0"><stop offset="0" stop-color="#7767de"/><stop offset="0.45" stop-color="#7e6adf"/><stop offset="1" stop-color="#8e76e6"/></linearGradient>
<radialGradient id="glowT" cx="290" cy="205" r="125" gradientUnits="userSpaceOnUse"><stop offset="0" stop-color="#cfa4f4" stop-opacity="0.95"/><stop offset="0.45" stop-color="#aa86ea" stop-opacity="0.55"/><stop offset="1" stop-color="#9079e6" stop-opacity="0"/></radialGradient>
<linearGradient id="handT" x1="0" y1="0" x2="1" y2="0"><stop offset="0" stop-color="#c98200"/><stop offset="0.28" stop-color="#f5bf00"/><stop offset="0.65" stop-color="#fff000"/><stop offset="1" stop-color="#ffe400"/></linearGradient>
<linearGradient id="lensT" x1="0.15" y1="0.1" x2="0.85" y2="0.95"><stop offset="0" stop-color="#9079d8"/><stop offset="0.3" stop-color="#6657c6"/><stop offset="0.6" stop-color="#4a40b6"/><stop offset="0.85" stop-color="#5a46b8"/><stop offset="1" stop-color="#9a6cc8"/></linearGradient>
<radialGradient id="rimT" cx="203.6" cy="172" r="75" gradientUnits="userSpaceOnUse"><stop offset="0.86" stop-color="#b49ae6" stop-opacity="0"/><stop offset="0.95" stop-color="#b49ae6" stop-opacity="0.55"/><stop offset="1" stop-color="#c9a8ee" stop-opacity="0.75"/></radialGradient>
<radialGradient id="lshdT" cx="168" cy="198" r="120" gradientUnits="userSpaceOnUse"><stop offset="0" stop-color="#2a2190" stop-opacity="0.6"/><stop offset="0.55" stop-color="#2a2190" stop-opacity="0.5"/><stop offset="0.8" stop-color="#2f2598" stop-opacity="0.2"/><stop offset="1" stop-color="#3a2fa4" stop-opacity="0"/></radialGradient>
<linearGradient id="hshdT" x1="40" y1="0" x2="203.5" y2="0" gradientUnits="userSpaceOnUse"><stop offset="0" stop-color="#2a2190" stop-opacity="0"/><stop offset="0.3" stop-color="#2a2190" stop-opacity="0.12"/><stop offset="0.6" stop-color="#2a2190" stop-opacity="0.38"/><stop offset="0.82" stop-color="#261d8a" stop-opacity="0.7"/><stop offset="0.93" stop-color="#221a84" stop-opacity="0.92"/><stop offset="1" stop-color="#221a84" stop-opacity="0.95"/></linearGradient>
<linearGradient id="hglowT" x1="203" y1="0" x2="323" y2="0" gradientUnits="userSpaceOnUse"><stop offset="0" stop-color="#b888ea" stop-opacity="0.85"/><stop offset="0.25" stop-color="#b888ea" stop-opacity="0.6"/><stop offset="0.6" stop-color="#a884ea" stop-opacity="0.25"/><stop offset="1" stop-color="#9079e6" stop-opacity="0"/></linearGradient>
<linearGradient id="vfT" x1="0" y1="215" x2="0" y2="300" gradientUnits="userSpaceOnUse"><stop offset="0" stop-color="#000"/><stop offset="1" stop-color="#fff"/></linearGradient>
<mask id="vfadeT" maskUnits="userSpaceOnUse" x="0" y="0" width="880" height="495"><rect x="0" y="0" width="880" height="495" fill="url(#vfT)"/></mask>
<filter id="b18T" x="-50%" y="-50%" width="200%" height="200%"><feGaussianBlur stdDeviation="20"/></filter>
<filter id="b8T" x="-50%" y="-50%" width="200%" height="200%"><feGaussianBlur stdDeviation="9"/></filter>
<clipPath id="blobclipT"><path d="M0,0 L283.0,0.0 C286.7,3.8 297.0,14.7 305.0,22.6 C313.0,30.5 322.3,39.2 331.0,47.4 C339.7,55.6 349.2,63.6 357.0,72.0 C364.8,80.4 372.3,89.3 378.0,98.0 C383.7,106.7 387.5,115.3 391.0,124.0 C394.5,132.7 397.0,141.3 399.0,150.0 C401.0,158.7 402.2,168.7 403.0,176.0 C403.8,183.3 403.7,188.3 403.5,194.0 C403.3,199.7 403.0,203.0 402.0,210.0 C401.0,217.0 399.3,227.3 397.5,236.0 C395.7,244.7 394.1,253.0 391.0,262.0 C387.9,271.0 382.8,282.0 379.0,290.0 C375.2,298.0 370.8,304.8 368.0,310.0 C365.2,315.2 365.1,315.0 362.0,321.0 C358.9,327.0 353.9,338.7 349.7,346.0 C345.5,353.3 342.6,358.4 337.0,365.0 C331.4,371.6 322.9,379.9 316.0,385.7 C309.1,391.5 302.4,395.7 295.5,400.0 C288.6,404.3 281.7,408.2 274.7,411.7 C267.8,415.2 260.7,418.2 253.8,421.0 C246.8,423.8 238.7,426.6 233.0,428.4 C227.3,430.1 227.4,430.6 219.7,431.5 C212.0,432.4 198.2,433.6 186.7,434.0 C175.3,434.4 163.5,434.1 151.0,433.9 C138.5,433.6 124.8,433.2 111.6,432.5 C98.4,431.8 85.2,431.1 72.0,429.6 C58.8,428.2 44.5,426.1 32.5,423.8 C20.5,421.5 5.4,417.3 0.0,416.0 L0,416.0 Z"/></clipPath>
<clipPath id="lensclipT"><circle cx="203.6" cy="172" r="75"/></clipPath>
<clipPath id="leftcT"><rect x="0" y="0" width="203" height="495"/></clipPath>
<clipPath id="rightcT"><rect x="203" y="0" width="300" height="495"/></clipPath>
</defs>
<g clip-path="url(#blobclipT)">
<rect width="420" height="440" fill="url(#bgT)"/>
<rect x="40" y="60" width="280" height="260" fill="url(#lshdT)"/>
<rect x="40" y="215" width="163.5" height="260" fill="url(#hshdT)" mask="url(#vfadeT)"/>
<rect x="150" y="60" width="280" height="330" fill="url(#glowT)"/>
<rect x="203" y="215" width="120" height="260" fill="url(#hglowT)" mask="url(#vfadeT)"/>
<text transform="translate(282.5,278.0) scale(.9,1)" font-size="155.2" fill="#ffffff">?</text>
<text transform="translate(24.5,128.5) scale(.9,1)" font-size="17.8" fill="#f8f7fb">?</text>
<text transform="translate(74.3,147.0) scale(.9,1)" font-size="37.2" fill="#f8f7fb">?</text>
<text transform="translate(98.7,150.5) scale(.9,1)" font-size="29.0" fill="#f8f7fb">?</text>
<text transform="translate(121.7,143.0) scale(.9,1)" font-size="65.4" fill="#f8f7fb">?</text>
<text transform="translate(162.3,96.3) scale(.9,1)" font-size="18.8" fill="#f8f7fb">?</text>
<text transform="translate(214.5,91.0) scale(.9,1)" font-size="38.6" fill="#f8f7fb">?</text>
<text transform="translate(256.5,108.0) scale(.9,1)" font-size="44.1" fill="#f8f7fb">?</text>
<text transform="translate(328.3,119.3) scale(.9,1)" font-size="37.7" fill="#f8f7fb">?</text>
<text transform="translate(364.8,108.0) scale(.9,1)" font-size="19.3" fill="#f8f7fb">?</text>
<text transform="translate(286.3,148.8) scale(.9,1)" font-size="38.3" fill="#f8f7fb">?</text>
<text transform="translate(311.3,157.6) scale(.9,1)" font-size="18.8" fill="#f8f7fb">?</text>
<text transform="translate(366.2,168.0) scale(.9,1)" font-size="18.6" fill="#f8f7fb">?</text>
<text transform="translate(98.7,218.0) scale(.9,1)" font-size="75.9" fill="#f8f7fb">?</text>
<text transform="translate(121.0,227.0) scale(.9,1)" font-size="37.8" fill="#f8f7fb">?</text>
<text transform="translate(53.0,236.0) scale(.9,1)" font-size="18.5" fill="#f8f7fb">?</text>
<text transform="translate(128.5,351.4) scale(.9,1)" font-size="155.7" fill="#f8f7fb">?</text>
<text transform="translate(253.7,267.4) scale(.9,1)" font-size="37.8" fill="#f8f7fb">?</text>
<text transform="translate(236.0,292.8) scale(.9,1)" font-size="38.3" fill="#f8f7fb">?</text>
<text transform="translate(262.0,334.4) scale(.9,1)" font-size="38.2" fill="#f8f7fb">?</text>
<path d="M194.5,249 L210.5,249 L210.5,274.5 L215.5,274.5 L215.5,279 L214.5,279 L220,440 L186,440 L191.5,279 L190.5,279 L190.5,274.5 L194.5,274.5 Z" fill="url(#handT)"/>
<rect x="190.5" y="274.5" width="25" height="1.2" fill="#d69a00" opacity=".7"/>
</g>
<circle cx="203.6" cy="172" r="76" fill="url(#lensT)"/>
<g clip-path="url(#lensclipT)">
<text transform="translate(282.5,278.0) scale(.9,1)" font-size="155.2" fill="#ebe2e2" opacity=".88">?</text>
<text transform="translate(201.3,210.7) scale(.9,1)" font-size="109.9" fill="#eceaf4">?</text>
<text transform="translate(147.0,174.0) scale(.9,1)" font-size="19.3" fill="#eceaf4">?</text>
<text transform="translate(169.0,223.0) scale(.9,1)" font-size="41.7" fill="#eceaf4">?</text>
</g>
<circle cx="203.6" cy="172" r="75" fill="url(#rimT)"/>
<circle cx="203.6" cy="172" r="76" fill="none" stroke="#f8bd00" stroke-width="4"/>
<path d="M330.3,0.0 C334.7,4.2 348.2,15.2 357.0,25.0 C365.8,34.8 376.0,48.2 383.0,59.0 C390.0,69.8 394.7,79.2 399.0,90.0 C403.3,100.8 406.8,114.0 409.0,124.0 C411.2,134.0 412.1,141.3 412.4,150.0 C412.7,158.7 411.6,170.3 411.0,176.0 C410.4,181.7 410.7,178.3 408.7,184.0 C406.7,189.7 402.6,201.3 398.8,210.0 C395.0,218.7 390.6,227.0 385.8,236.0 C381.0,245.0 375.0,254.3 370.0,264.0 C365.0,273.7 361.4,284.5 355.9,294.0 C350.4,303.5 343.6,311.7 337.0,321.0 C330.4,330.3 323.2,341.7 316.3,350.0 C309.4,358.3 302.4,365.1 295.5,371.0 C288.6,376.9 281.7,381.0 274.7,385.7 C267.8,390.4 260.7,394.8 253.8,399.0 C246.8,403.2 241.3,407.0 233.0,410.7 C224.7,414.4 215.3,417.7 203.8,421.0 C192.3,424.3 177.2,427.9 164.0,430.4 C150.8,432.9 138.8,434.5 124.8,436.0 C110.8,437.5 93.2,438.7 80.0,439.4 C66.8,440.1 59.0,440.1 45.7,440.0 C32.4,439.9 7.6,439.2 0.0,439.0" fill="none" stroke="#d67ad2" stroke-width="4.6"/>
</svg>
<div class="t" style="left:447.0px;top:97.0px;font-size:27px;color:#ffffff;font-family:'Liberation Serif',serif;letter-spacing:0.33px;">INVESTIGAR:</div>
<div class="t" style="left:447.0px;top:170.3px;font-size:17px;transform:scaleX(0.941);">•</div>
<div class="t" style="left:463.0px;top:170.3px;font-size:17px;transform:scaleX(0.941);"><span class="w">Analizar</span> <span class="w">diferentes</span> <span class="w">fuentes</span> <span class="w">documentales</span> de <span class="w">los</span></div>
<div class="t" style="left:447.0px;top:192.0px;font-size:17px;transform:scaleX(0.9285);"><span class="w">autores</span> y <span class="w">autoras</span> <span class="w">más</span> <span class="w">representativos</span> <span class="w">en</span> <span class="w">el</span> <span class="w">uso</span></div>
<div class="t" style="left:447.0px;top:213.6px;font-size:17px;transform:scaleX(0.9503);"><span class="w">didáctico</span> de las <span class="w">instalaciones</span> de <span class="w">juego</span> <span class="w">analizando</span></div>
<div class="t" style="left:456.0px;top:244.1px;font-size:17px;transform:scaleX(0.941);">•</div>
<div class="t" style="left:471.0px;top:244.1px;font-size:17px;transform:scaleX(0.925);"><span class="w">Qué</span> son y <span class="w">qué</span> no son?.</div>
<div class="t" style="left:456.0px;top:274.0px;font-size:17px;transform:scaleX(0.941);">•</div>
<div class="t" style="left:471.0px;top:274.0px;font-size:17px;transform:scaleX(0.8982);">Para <span class="w">qué</span> <span class="w">sirven</span>?.</div>
<div class="t" style="left:456.0px;top:304.9px;font-size:17px;transform:scaleX(0.941);">•</div>
<div class="t" style="left:471.0px;top:304.9px;font-size:17px;transform:scaleX(0.941);"><span class="w">Qué</span> <span class="w">materiales</span> y <span class="w">qué</span> <span class="w">disposiciones</span> <span class="w">espaciales</span></div>
<div class="t" style="left:471.0px;top:326.7px;font-size:17px;transform:scaleX(0.9024);">son las <span class="w">más</span> <span class="w">adecuadas</span>?.</div>
<div class="t" style="left:456.0px;top:357.2px;font-size:17px;transform:scaleX(0.941);">•</div>
<div class="t" style="left:471.0px;top:357.2px;font-size:17px;transform:scaleX(0.941);"><span class="w">Qué</span> roles <span class="w">tienen</span>&nbsp; <span class="w">los</span> <span class="w">educadores</span> <span class="w">en</span> la</div>
<div class="t" style="left:471.0px;top:378.7px;font-size:17px;transform:scaleX(0.9482);"><span class="w">implementación</span> de la <span class="w">instalación</span> con <span class="w">los</span></div>
<div class="t" style="left:471.0px;top:400.0px;font-size:17px;transform:scaleX(0.9274);"><span class="w">destinatarios</span>?.</div>
<div class="t" style="left:363.0px;top:463.4px;font-size:17px;color:#ffffff;transform:scaleX(0.95);">Ángeles Díaz 1°EIB</div>
</div></div>
</body>
</html>
